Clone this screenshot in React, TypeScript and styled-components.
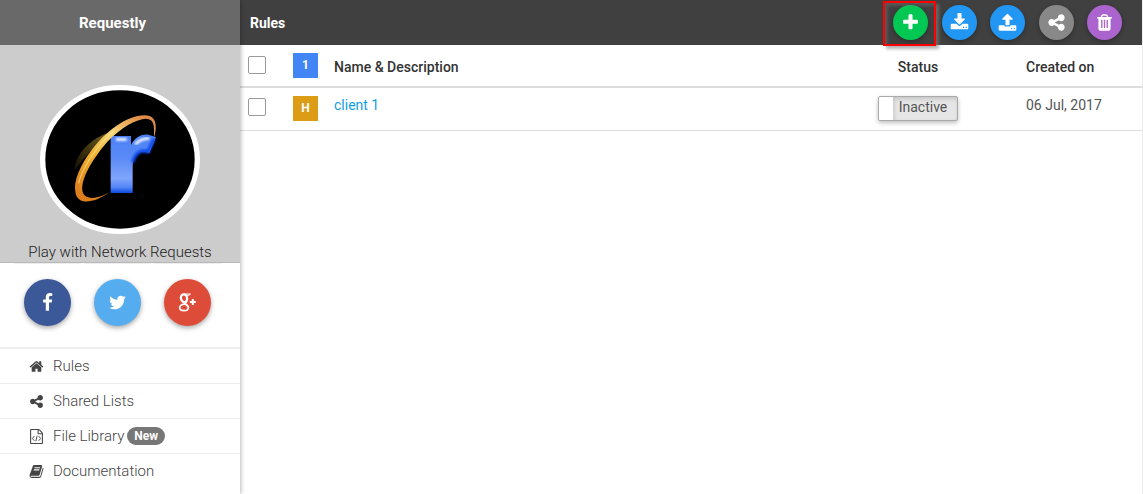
import React from 'react';
import styled, { createGlobalStyle } from 'styled-components';

const GlobalStyle = createGlobalStyle`
  * { box-sizing: border-box; }
  body {
    margin: 0;
    background: #fff;
    color: #555;
    font: 14px/20px Roboto, "Liberation Sans", sans-serif;
  }
  button { font: inherit; border: 0; padding: 0; cursor: pointer; }
  a { text-decoration: none; }
`;

const Page = styled.div`
  display: flex;
  min-height: 100vh;
  border-right: 1px solid #ececec;
`;

const Sidebar = styled.aside`
  position: relative;
  flex: 0 0 240px;
  background: #fff;
  box-shadow: 0 0 5px rgba(0, 0, 0, 0.4);
`;

const Brand = styled.header`
  display: flex;
  align-items: center;
  justify-content: center;
  height: 45px;
  padding-right: 15px;
  background: #696969;
  color: #fff;
  font-size: 15px;
  font-weight: 700;
`;

const Profile = styled.section`
  display: flex;
  flex-direction: column;
  align-items: center;
  height: 218px;
  padding-top: 40px;
  background: #ccc;
  border-bottom: 1px solid #b8b8b8;
`;

const Logo = styled.svg`
  display: block;
  width: 160px;
  height: 149px;
`;

const Tagline = styled.p`
  margin: 8px 0 0;
  color: #222;
  font-size: 15px;
  font-weight: 300;
`;

const Social = styled.div`
  display: flex;
  gap: 3px;
  height: 86px;
  padding-left: 14px;
  border-bottom: 2px solid #eee;
`;

const SocialCell = styled.div`
  display: flex;
  justify-content: center;
  width: 67px;
  height: 64px;
  padding-top: 15px;
  border-top: 1px solid #eee;
`;

const SocialLink = styled.a<{ $color: string }>`
  display: flex;
  align-items: center;
  justify-content: center;
  width: 47px;
  height: 47px;
  border-radius: 50%;
  background: ${(p) => p.$color};
  color: #fff;
  box-shadow: 0 2px 5px rgba(0, 0, 0, 0.35);
`;

const Glyph = styled.svg<{ $size: number }>`
  display: block;
  flex: none;
  width: ${(p) => p.$size}px;
  height: ${(p) => p.$size}px;
  fill: currentColor;
`;

const NavItem = styled.a`
  display: flex;
  align-items: center;
  height: 35px;
  padding-left: 29px;
  color: #444;
  font-size: 15px;
  font-weight: 300;
  border-bottom: 1px solid #eee;
  &:last-child { border-bottom-color: transparent; }
`;

const NavLabel = styled.span`
  margin-left: 9px;
`;

const NewTag = styled.span`
  margin-left: 3px;
  padding: 0 7px;
  border-radius: 9px;
  background: #777;
  color: #fff;
  font-size: 12px;
  font-weight: 700;
  line-height: 18px;
`;

const Main = styled.main`
  flex: 1;
  min-width: 0;
`;

const TopBar = styled.header`
  display: flex;
  align-items: center;
  justify-content: space-between;
  height: 45px;
  padding: 0 20px 0 10px;
  background: #404040;
`;

const Title = styled.h1`
  margin: 0;
  color: #fff;
  font-size: 14px;
  font-weight: 700;
`;

const Actions = styled.div`
  display: flex;
  justify-content: space-between;
  width: 229px;
`;

const ActionSlot = styled.div`
  position: relative;
`;

const ActionButton = styled.button<{ $color: string }>`
  display: flex;
  align-items: center;
  justify-content: center;
  width: 35px;
  height: 35px;
  border-radius: 50%;
  background: ${(p) => p.$color};
  color: #fff;
  box-shadow: 0 2px 5px rgba(0, 0, 0, 0.3);
`;

const Highlight = styled.span`
  position: absolute;
  inset: -4px -8px -6px -10px;
  border: 2px solid #f00;
  box-shadow: 3px 3px 3px rgba(128, 128, 128, 0.6), inset 3px 3px 3px rgba(128, 128, 128, 0.35);
  pointer-events: none;
`;

const RulesTable = styled.table`
  width: 100%;
  border-collapse: separate;
  border-spacing: 0;
  table-layout: fixed;
  text-align: left;

  th, td { vertical-align: top; }
  th {
    height: 43px;
    padding: 8px;
    border-bottom: 2px solid #ddd;
    color: #333;
    font-weight: 500;
  }
  td {
    height: 43px;
    padding: 8px;
    border-bottom: 1px solid #ddd;
    line-height: 18px;
  }
`;

const Column = styled.col<{ $width?: number }>`
  width: ${(p) => (p.$width ? `${p.$width}px` : 'auto')};
`;

const HeadText = styled.div<{ $center?: boolean }>`
  padding-top: 4px;
  text-align: ${(p) => (p.$center ? 'center' : 'left')};
`;

const Check = styled.input`
  display: block;
  appearance: none;
  width: 18px;
  height: 18px;
  margin: 2px 0 0;
  border: 1px solid #999;
  border-radius: 2px;
  background: #fff;
  thead & { margin-top: 3px; }
  &:checked { background: #4285f4; }
`;

const Badge = styled.span<{ $color: string }>`
  display: block;
  width: 25px;
  height: 25px;
  background: ${(p) => p.$color};
  color: #fff;
  font-size: 12px;
  font-weight: 700;
  line-height: 25px;
  text-align: center;
`;

const RuleLink = styled.a`
  color: #109de6;
`;

const Toggle = styled.button`
  display: flex;
  width: 80px;
  height: 25px;
  margin: 0 auto;
  border: 1px solid #aaa;
  border-radius: 2px;
  background: #e6e6e6;
  color: #555;
  box-shadow: 0 2px 4px rgba(0, 0, 0, 0.25);
  overflow: hidden;
`;

const Knob = styled.span`
  width: 14px;
  height: 23px;
  background: #fff;
`;

const ToggleText = styled.span`
  flex: 1;
  padding-right: 4px;
  box-shadow: inset 1px 2px 4px rgba(0, 0, 0, 0.15);
  line-height: 21px;
  height: 23px;
  text-align: center;
`;

const icons = {
  plus: 'M1600 736v192q0 40-28 68t-68 28h-416v416q0 40-28 68t-68 28h-192q-40 0-68-28t-28-68v-416h-416q-40 0-68-28t-28-68v-192q0-40 28-68t68-28h416v-416q0-40 28-68t68-28h192q40 0 68 28t28 68v416h416q40 0 68 28t28 68z',
  download: 'M1344 1344q0-26-19-45t-45-19-45 19-19 45 19 45 45 19 45-19 19-45zm256 0q0-26-19-45t-45-19-45 19-19 45 19 45 45 19 45-19 19-45zm128-224v320q0 40-28 68t-68 28h-1472q-40 0-68-28t-28-68v-320q0-40 28-68t68-28h465l135 136q58 56 136 56t136-56l136-136h464q40 0 68 28t28 68zm-325-569q17 41-14 70l-448 448q-18 19-45 19t-45-19l-448-448q-31-29-14-70 17-39 59-39h256v-448q0-26 19-45t45-19h256q26 0 45 19t19 45v448h256q42 0 59 39z',
  upload: 'M1344 1472q0-26-19-45t-45-19-45 19-19 45 19 45 45 19 45-19 19-45zm256 0q0-26-19-45t-45-19-45 19-19 45 19 45 45 19 45-19 19-45zm128-224v320q0 40-28 68t-68 28h-1472q-40 0-68-28t-28-68v-320q0-40 28-68t68-28h427q21 56 70.5 92t110.5 36h256q61 0 110.5-36t70.5-92h427q40 0 68 28t28 68zm-325-648q-17 40-59 40h-256v448q0 26-19 45t-45 19h-256q-26 0-45-19t-19-45v-448h-256q-42 0-59-40-17-39 14-69l448-448q18-19 45-19t45 19l448 448q31 30 14 69z',
  share: 'M1344 1024q133 0 226.5 93.5t93.5 226.5-93.5 226.5-226.5 93.5-226.5-93.5-93.5-226.5q0-12 2-34l-360-180q-92 86-218 86-133 0-226.5-93.5t-93.5-226.5 93.5-226.5 226.5-93.5q126 0 218 86l360-180q-2-22-2-34 0-133 93.5-226.5t226.5-93.5 226.5 93.5 93.5 226.5-93.5 226.5-226.5 93.5q-126 0-218-86l-360 180q2 22 2 34t-2 34l360 180q92-86 218-86z',
  trash: 'M704 1376v-704q0-14-9-23t-23-9h-64q-14 0-23 9t-9 23v704q0 14 9 23t23 9h64q14 0 23-9t9-23zm256 0v-704q0-14-9-23t-23-9h-64q-14 0-23 9t-9 23v704q0 14 9 23t23 9h64q14 0 23-9t9-23zm256 0v-704q0-14-9-23t-23-9h-64q-14 0-23 9t-9 23v704q0 14 9 23t23 9h64q14 0 23-9t9-23zm-544-992h448l-48-117q-7-9-17-11h-317q-10 2-17 11zm928 32v64q0 14-9 23t-23 9h-96v948q0 83-47 143.5t-113 60.5h-832q-66 0-113-58.5t-47-141.5v-952h-96q-14 0-23-9t-9-23v-64q0-14 9-23t23-9h309l70-167q15-37 54-63t79-26h320q40 0 79 26t54 63l70 167h309q14 0 23 9t9 23z',
  home: 'M1472 992v480q0 26-19 45t-45 19h-384v-384h-256v384h-384q-26 0-45-19t-19-45v-480q0-1 .5-3t.5-3l575-474 575 474q1 2 1 6zm223-69l-62 74q-8 9-21 11h-3q-13 0-21-7l-692-577-692 577q-12 8-24 7-13-2-21-11l-62-74q-8-10-7-23.5t11-21.5l719-599q32-26 76-26t76 26l244 204v-195q0-14 9-23t23-9h192q14 0 23 9t9 23v408l219 182q10 8 11 21.5t-7 23.5z',
  twitter: 'M1684 408q-67 98-162 167 1 14 1 42 0 130-38 259.5t-115.5 248.5-184.5 210.5-258 146-323 54.5q-271 0-496-145 35 4 78 4 225 0 401-138-105-2-188-64.5t-114-159.5q33 5 61 5 43 0 85-11-112-23-185.5-111.5t-73.5-205.5v-4q68 38 146 41-66-44-105-115t-39-154q0-88 44-163 121 149 294.5 238.5t371.5 99.5q-8-38-8-74 0-134 94.5-228.5t228.5-94.5q140 0 236 102 109-21 205-78-37 115-142 178 93-10 186-50z',
  facebook: 'M1343 12v264h-157q-86 0-116 36t-30 108v189h293l-39 296h-254v759h-306v-759h-255v-296h255v-218q0-186 104-288.5t277-102.5q147 0 228 12z',
  book: 'M1703 478q40 57 18 129l-275 906q-19 64-76.5 107.5t-122.5 43.5h-923q-77 0-148.5-53.5t-99.5-131.5q-24-67-2-127 0-4 3-27t4-37q1-8-3-21.5t-3-19.5q2-11 8-21t16.5-23.5 16.5-23.5q23-38 45-91.5t30-91.5q3-10 .5-30t-.5-28q3-11 17-28t17-23q21-36 42-92t25-90q1-9-2.5-32t.5-28q4-13 22-30.5t22-22.5q19-26 42.5-84.5t27.5-96.5q1-8-3-25.5t-2-26.5q2-8 9-18t18-23 17-21q8-12 16.5-30.5t15-35 16-36 19.5-32 26.5-23.5 36-11.5 47.5 5.5l-1 3q38-9 51-9h761q74 0 114 56t18 130l-274 906q-36 119-71.5 153.5t-128.5 34.5h-869q-27 0-38 15-11 16-1 43 24 70 144 70h923q29 0 56-15.5t35-41.5l300-987q7-22 5-57 38 15 59 43zm-1064 2q-4 13 2 22.5t20 9.5h608q13 0 25.5-9.5t16.5-22.5l21-64q4-13-2-22.5t-20-9.5h-608q-13 0-25.5 9.5t-16.5 22.5zm-83 256q-4 13 2 22.5t20 9.5h608q13 0 25.5-9.5t16.5-22.5l21-64q4-13-2-22.5t-20-9.5h-608q-13 0-25.5 9.5t-16.5 22.5z',
  file: 'M1596 380q28 28 48 76t20 88v1152q0 40-28 68t-68 28h-1344q-40 0-68-28t-28-68v-1600q0-40 28-68t68-28h896q40 0 88 20t76 48zm-444-244v376h376q-10-29-22-41l-313-313q-12-12-41-22zm384 1528v-1024h-416q-40 0-68-28t-28-68v-416h-768v1536h1280z',
};

type IconName = keyof typeof icons;

const Icon = ({ name, size }: { name: IconName; size: number }) => (
  <Glyph $size={size} viewBox="0 0 1792 1792" aria-hidden="true">
    <path d={icons[name]} />
    {name === 'file' && (
      <path
        d="M640 850L400 1130L640 1410M1152 850L1392 1130L1152 1410M980 800L812 1470"
        fill="none"
        stroke="currentColor"
        strokeWidth="110"
      />
    )}
  </Glyph>
);

const GooglePlus = () => (
  <Glyph $size={19} viewBox="0 0 19 19" aria-hidden="true">
    <g fill="none" stroke="currentColor">
      <ellipse cx="6" cy="5.200" rx="3.100" ry="3.900" strokeWidth="2.200" transform="rotate(-12 6 5.200)" />
      <path d="M6 1H12.500L11 2.200H8.500" strokeWidth="1" />
      <path d="M8.600 7.800C8.400 9.400 6.500 9.400 7 10.500C8 11.700 10.500 12.400 10.400 14.600" strokeWidth="2" />
      <path d="M7.500 11.200C3.500 11 1.700 12.800 1.700 14.600C1.700 16.900 4 17.700 6 17.700C8.800 17.700 10.500 16.500 10.400 14.300" strokeWidth="1.700" />
      <path d="M14.800 6V12M11.800 9H17.800" strokeWidth="2" />
    </g>
  </Glyph>
);

const RequestlyLogo = () => (
  <Logo viewBox="60 30 480 447" role="img" aria-label="Requestly logo">
    <defs>
      <linearGradient id="ring" x1="0.8" y1="0" x2="0.2" y2="1">
        <stop offset="0" stopColor="#e08a48" />
        <stop offset="0.3" stopColor="#f6d878" />
        <stop offset="0.6" stopColor="#eeb02f" />
        <stop offset="1" stopColor="#dd7d1b" />
      </linearGradient>
      <linearGradient id="glow" x1="1" y1="0" x2="0" y2="1">
        <stop offset="0" stopColor="#a98b2e" />
        <stop offset="1" stopColor="#1a1300" />
      </linearGradient>
      <linearGradient id="letter" x1="0" y1="0" x2="0" y2="1">
        <stop offset="0" stopColor="#4a80f6" />
        <stop offset="0.4" stopColor="#5a8af6" />
        <stop offset="0.75" stopColor="#80a5fb" />
        <stop offset="0.9" stopColor="#5585f8" />
        <stop offset="1" stopColor="#0b4ae0" />
      </linearGradient>
      <filter id="soft"><feGaussianBlur stdDeviation="3" /></filter>
    </defs>
    <ellipse cx="300" cy="253.500" rx="232" ry="215.500" fill="#000" stroke="#fff" strokeWidth="16" />
    <path d="M270 172C215 188 162 240 164 288C190 250 222 215 270 172Z" fill="url(#glow)" opacity="0.7" />
    <path d="M272 183H333V210C345 186 364 177 385 179L408 186L388 234C358 222 339 238 338 275V354H272Z" fill="url(#letter)" />
    <path d="M275 190V350" fill="none" stroke="#1f5cf0" strokeWidth="5" filter="url(#soft)" />
    <path d="M402 192L384 230Q350 220 338 262" fill="none" stroke="#0a48ea" strokeWidth="10" filter="url(#soft)" />
    <path d="M288 193H320M346 208Q362 190 388 190" fill="none" stroke="#e4edff" strokeWidth="10" filter="url(#soft)" />
    <path d="M404 182C412 150 408 122 375 121C320 120 255 172 215 225C180 270 160 320 166 350C170 388 215 390 268 352C225 378 188 372 187 345C184 310 215 255 262 200C305 155 350 132 378 131C402 132 403 150 402 182Z" fill="url(#ring)" />
    <path d="M176 325C185 282 228 214 282 168" fill="none" stroke="#fff2a0" strokeWidth="3" opacity="0.7" />
  </Logo>
);

const navItems: { icon: IconName; label: string; tag?: string }[] = [
  { icon: 'home', label: 'Rules' },
  { icon: 'share', label: 'Shared Lists' },
  { icon: 'file', label: 'File Library', tag: 'New' },
  { icon: 'book', label: 'Documentation' },
];

const actions: { icon: IconName; label: string; color: string }[] = [
  { icon: 'plus', label: 'New rule', color: '#00c853' },
  { icon: 'download', label: 'Download rules', color: '#2196f3' },
  { icon: 'upload', label: 'Upload rules', color: '#2196f3' },
  { icon: 'share', label: 'Share rules', color: '#888' },
  { icon: 'trash', label: 'Delete rules', color: '#ab63cd' },
];

export default function App() {
  return (
    <>
      <GlobalStyle />
      <Page>
        <Sidebar>
          <Brand>Requestly</Brand>
          <Profile>
            <RequestlyLogo />
            <Tagline>Play with Network Requests</Tagline>
          </Profile>
          <Social>
            <SocialCell>
              <SocialLink href="#facebook" aria-label="Facebook" $color="#3b5998"><Icon name="facebook" size={19} /></SocialLink>
            </SocialCell>
            <SocialCell>
              <SocialLink href="#twitter" aria-label="Twitter" $color="#55acee"><Icon name="twitter" size={19} /></SocialLink>
            </SocialCell>
            <SocialCell>
              <SocialLink href="#google" aria-label="Google Plus" $color="#dd4b39"><GooglePlus /></SocialLink>
            </SocialCell>
          </Social>
          <nav>
            {navItems.map((item) => (
              <NavItem href="#" key={item.label}>
                <Icon name={item.icon} size={15} />
                <NavLabel>{item.label}</NavLabel>
                {item.tag && <NewTag>{item.tag}</NewTag>}
              </NavItem>
            ))}
          </nav>
        </Sidebar>
        <Main>
          <TopBar>
            <Title>Rules</Title>
            <Actions>
              {actions.map((action, i) => (
                <ActionSlot key={action.label}>
                  <ActionButton aria-label={action.label} $color={action.color}><Icon name={action.icon} size={19} /></ActionButton>
                  {i === 0 && <Highlight />}
                </ActionSlot>
              ))}
            </Actions>
          </TopBar>
          <RulesTable>
            <colgroup>
              <Column $width={45} />
              <Column $width={41} />
              <Column />
              <Column $width={200} />
              <Column $width={124} />
            </colgroup>
            <thead>
              <tr>
                <th><Check type="checkbox" aria-label="Select all rules" /></th>
                <th><Badge $color="#4285f4">1</Badge></th>
                <th><HeadText>Name &amp; Description</HeadText></th>
                <th><HeadText $center>Status</HeadText></th>
                <th><HeadText>Created on</HeadText></th>
              </tr>
            </thead>
            <tbody>
              <tr>
                <td><Check type="checkbox" aria-label="Select client 1" /></td>
                <td><Badge $color="#dc9c15">H</Badge></td>
                <td><RuleLink href="#client-1">client 1</RuleLink></td>
                <td>
                  <Toggle role="switch" aria-checked="false">
                    <Knob />
                    <ToggleText>Inactive</ToggleText>
                  </Toggle>
                </td>
                <td>06 Jul, 2017</td>
              </tr>
            </tbody>
          </RulesTable>
        </Main>
      </Page>
    </>
  );
}
